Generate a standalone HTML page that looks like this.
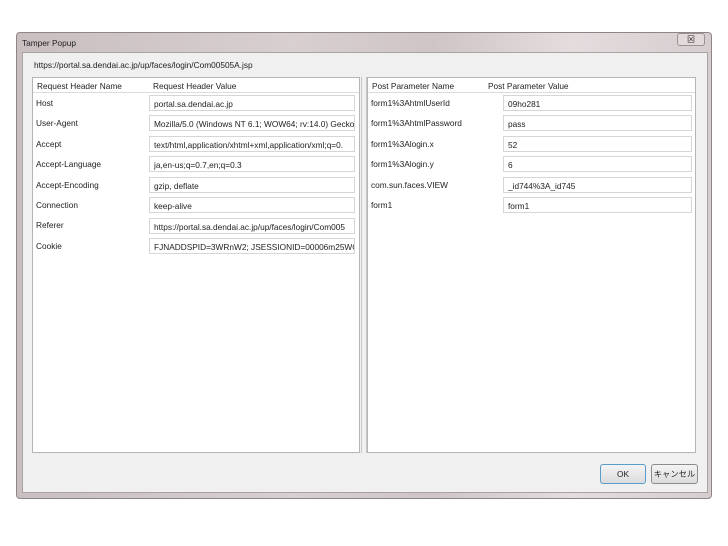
<!DOCTYPE html><html><head><meta charset="utf-8"><style>
*{margin:0;padding:0;box-sizing:border-box}
body{width:728px;height:546px;background:#fff;font-family:"Liberation Sans","Noto Sans CJK JP",sans-serif;font-size:8.3px;color:#222;position:relative;overflow:hidden}
.a{position:absolute}
.win{left:16px;top:32px;width:696px;height:467px;background:linear-gradient(90deg,#c9bfc1,#d8cfd0 40%,#cfc5c7 60%,#e4dcdd 80%,#d6cdcf);border:1px solid #8e8587;border-radius:4px}
.cont{left:22px;top:52px;width:686px;height:441px;background:#f0f0f0;border:1px solid #a9a2a3}
.panel{background:#fff;border:1px solid #b5b5b5}
.hdr{background:#fff;border-bottom:1px solid #dcdcdc;height:15px}
.inp{background:#fff;border:1px solid #d6d6d6;height:16px;padding:3px 4px;white-space:nowrap;overflow:hidden}
.btn{border:1px solid #8c8c8c;border-radius:3px;background:linear-gradient(#f4f4f4,#dcdcdc);text-align:center;line-height:18px;font-size:8.3px}
</style></head><body>
<div class="a win"></div>
<div class="a" style="left:22px;top:38px">Tamper Popup</div>
<div class="a" style="left:677px;top:33px;width:28px;height:13px;border:1px solid #9a9193;border-radius:3px;background:#e2dadb;text-align:center;font-size:8px;line-height:11px">⊠</div>
<div class="a cont"></div>
<div class="a" style="left:34px;top:60px">https://portal.sa.dendai.ac.jp/up/faces/login/Com00505A.jsp</div>

<div class="a panel" style="left:32px;top:77px;width:328px;height:376px"></div>
<div class="a hdr" style="left:33px;top:78px;width:326px"></div>
<div class="a" style="left:37px;top:81px">Request Header Name</div>
<div class="a" style="left:153px;top:81px">Request Header Value</div>

<div class="a panel" style="left:367px;top:77px;width:329px;height:376px"></div>
<div class="a hdr" style="left:368px;top:78px;width:327px"></div>
<div class="a" style="left:372px;top:81px">Post Parameter Name</div>
<div class="a" style="left:488px;top:81px">Post Parameter Value</div>
<div class="a" style="left:361px;top:77px;width:6px;height:376px;border-left:1px solid #c8c8c8;border-right:1px solid #c8c8c8"></div>

<div class="a" style="left:36px;top:93px;line-height:20.4px">Host<br>User-Agent<br>Accept<br>Accept-Language<br>Accept-Encoding<br>Connection<br>Referer<br>Cookie</div>
<div class="a inp" style="left:149px;top:95px;width:206px">portal.sa.dendai.ac.jp</div>
<div class="a inp" style="left:149px;top:115px;width:206px">Mozilla/5.0 (Windows NT 6.1; WOW64; rv:14.0) Gecko</div>
<div class="a inp" style="left:149px;top:136px;width:206px">text/html,application/xhtml+xml,application/xml;q=0.</div>
<div class="a inp" style="left:149px;top:156px;width:206px">ja,en-us;q=0.7,en;q=0.3</div>
<div class="a inp" style="left:149px;top:177px;width:206px">gzip, deflate</div>
<div class="a inp" style="left:149px;top:197px;width:206px">keep-alive</div>
<div class="a inp" style="left:149px;top:218px;width:206px">https://portal.sa.dendai.ac.jp/up/faces/login/Com005</div>
<div class="a inp" style="left:149px;top:238px;width:206px">FJNADDSPID=3WRnW2; JSESSIONID=00006m25WGF</div>

<div class="a" style="left:371px;top:93px;line-height:20.4px">form1%3AhtmlUserId<br>form1%3AhtmlPassword<br>form1%3Alogin.x<br>form1%3Alogin.y<br>com.sun.faces.VIEW<br>form1</div>
<div class="a inp" style="left:503px;top:95px;width:189px">09ho281</div>
<div class="a inp" style="left:503px;top:115px;width:189px">pass</div>
<div class="a inp" style="left:503px;top:136px;width:189px">52</div>
<div class="a inp" style="left:503px;top:156px;width:189px">6</div>
<div class="a inp" style="left:503px;top:177px;width:189px">_id744%3A_id745</div>
<div class="a inp" style="left:503px;top:197px;width:189px">form1</div>

<div class="a btn" style="left:600px;top:464px;width:46px;height:20px;border-color:#5a9ccc">OK</div>
<div class="a btn" style="left:651px;top:464px;width:47px;height:20px">キャンセル</div>
</body></html>
